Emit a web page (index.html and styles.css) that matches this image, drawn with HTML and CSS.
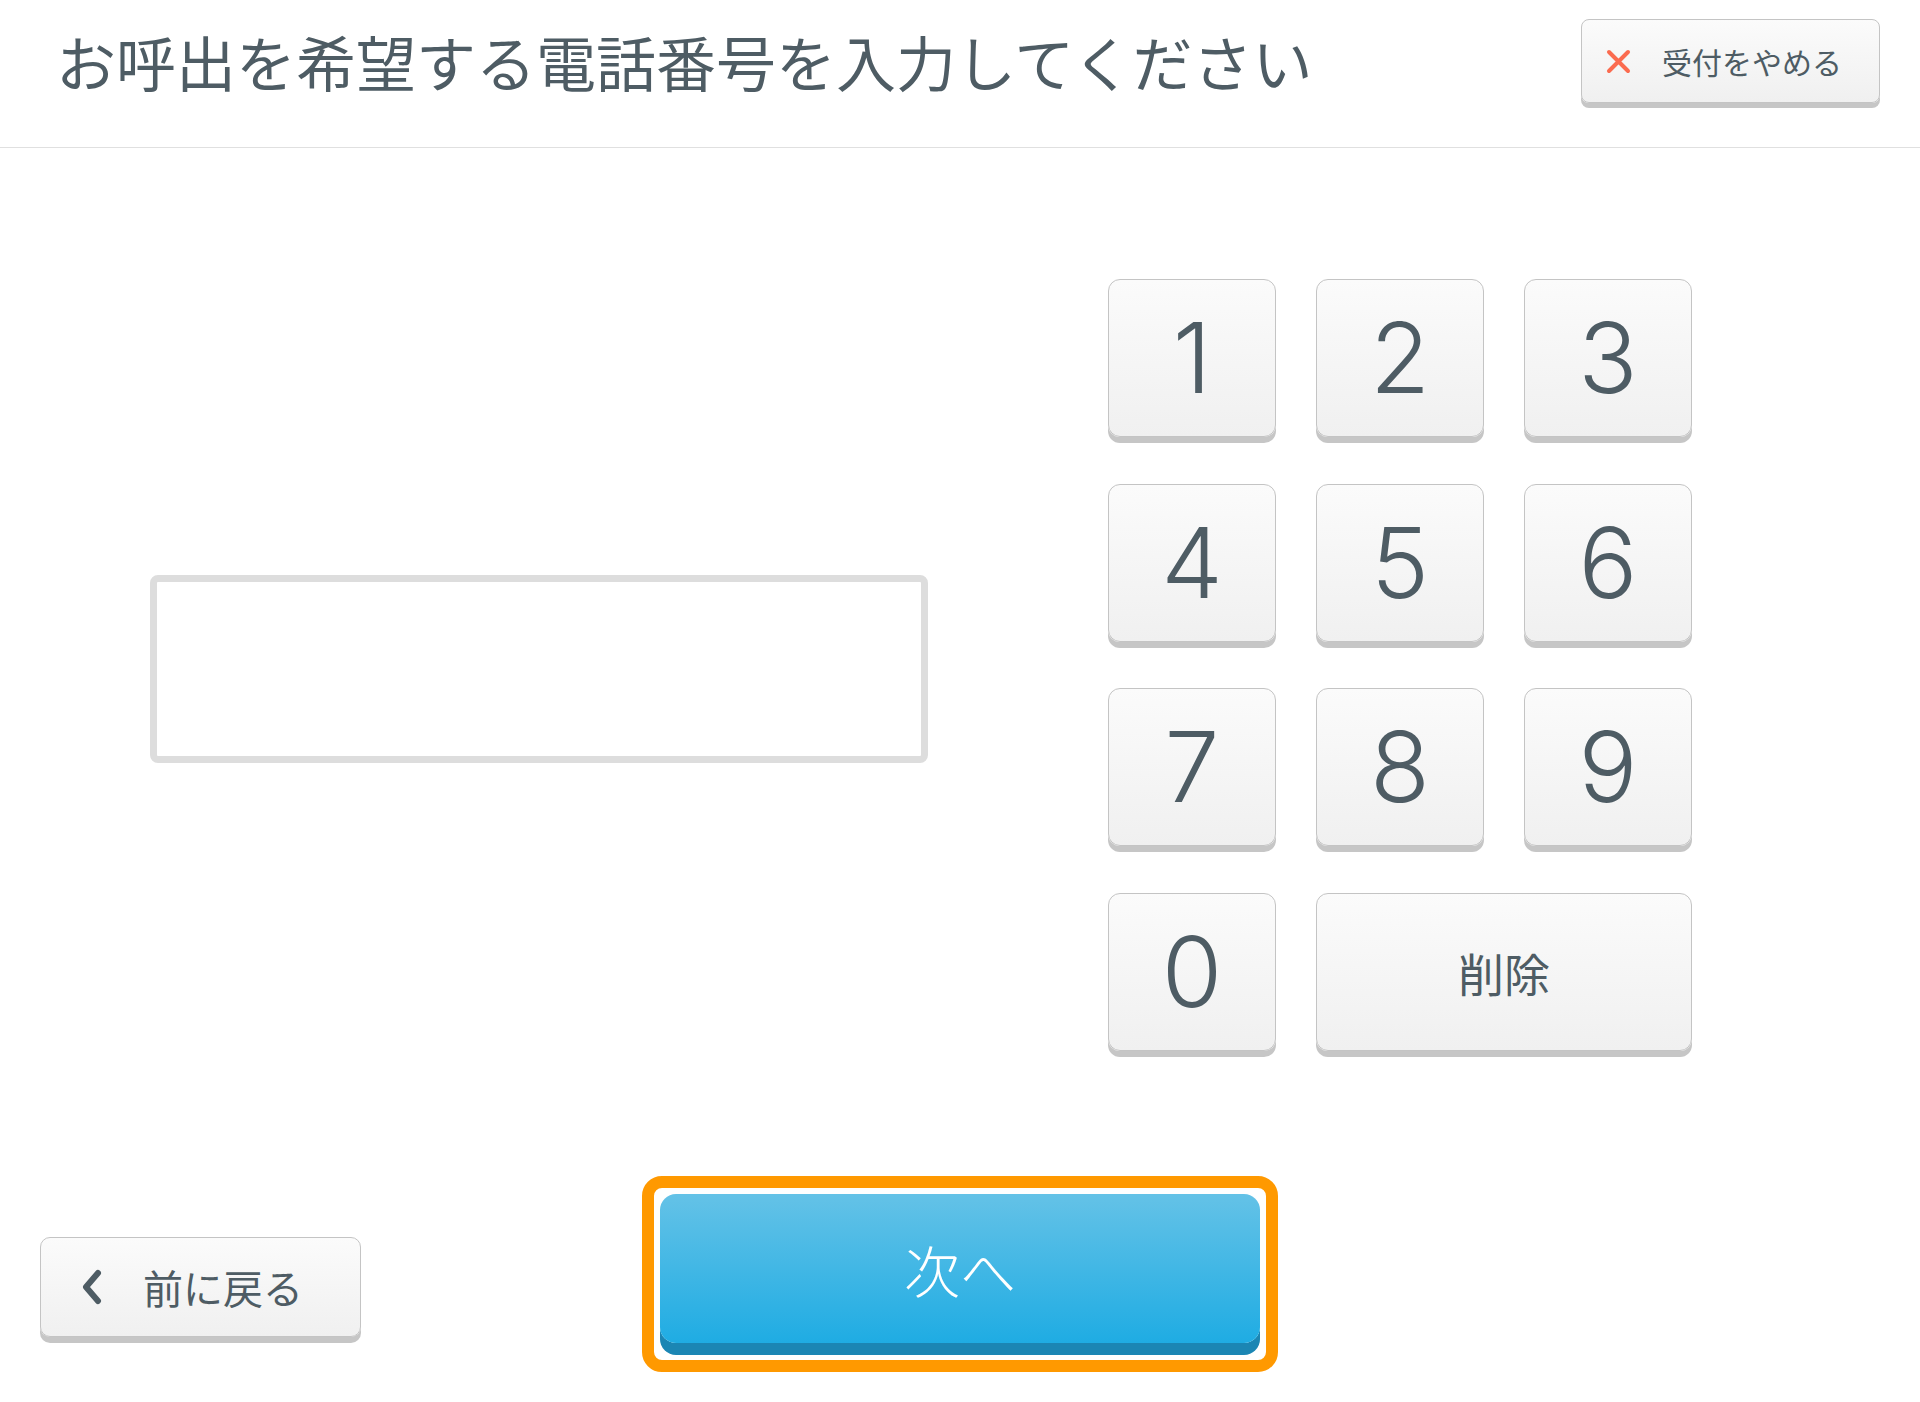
FILE: index.html
```html
<!DOCTYPE html>
<html lang="ja">

<head>
    <meta charset="UTF-8">
    <meta name="viewport" content="width=device-width, initial-scale=1.0">
    <link rel="stylesheet" href="styles.css">
    <title>電話番号入力</title>
</head>

<body>
    <div class="screen">
        <header class="header">
            <h1 class="title">お呼出を希望する電話番号を入力してください</h1>
            <button class="btn cancel-btn">
                <svg class="cancel-icon" width="25" height="25" viewBox="0 0 25 25">
                    <path d="M3 3 L22 22 M22 3 L3 22" stroke="#fb6b4f" stroke-width="4" stroke-linecap="round" fill="none" />
                </svg>
                <span>受付をやめる</span>
            </button>
        </header>

        <main class="main">
            <div class="number-field"></div>

            <div class="keypad">
                <button class="btn key">1</button>
                <button class="btn key">2</button>
                <button class="btn key">3</button>
                <button class="btn key">4</button>
                <button class="btn key">5</button>
                <button class="btn key">6</button>
                <button class="btn key">7</button>
                <button class="btn key">8</button>
                <button class="btn key">9</button>
                <button class="btn key">0</button>
                <button class="btn key key-delete">削除</button>
            </div>
        </main>

        <footer class="footer">
            <button class="btn back-btn">
                <svg class="back-icon" width="22" height="36" viewBox="0 0 22 36">
                    <path d="M17 4 L5 18 L17 32" stroke="#4e5c64" stroke-width="6" stroke-linecap="round" stroke-linejoin="round" fill="none" />
                </svg>
                <span>前に戻る</span>
            </button>

            <div class="next-focus">
                <button class="next-btn">次へ</button>
            </div>
        </footer>
    </div>
</body>

</html>
```

FILE: styles.css
```css
/* General */
body {
    margin: 0;
    background: #ffffff;
    color: #4e5c64;
    font-family: "Noto Sans CJK JP", "Noto Sans", sans-serif;
}

.screen {
    width: 1920px;
    height: 1402px;
    display: flex;
    flex-direction: column;
}

/* Header */
.header {
    box-sizing: border-box;
    height: 148px;
    padding: 0 40px 25px 56px;
    border-bottom: 1px solid #e0e0e0;
    display: flex;
    align-items: center;
    justify-content: space-between;
}

.title {
    margin: 0;
    font-size: 60px;
    font-weight: 400;
    line-height: 1.2;
    color: #4e5c64;
}

.btn {
    box-sizing: border-box;
    border: 1.5px solid #c4c4c4;
    background: linear-gradient(#fbfbfb, #f0f0f0);
    color: #4e5c64;
    font-family: "Noto Sans CJK JP", sans-serif;
    cursor: pointer;
    padding: 0;
}

.cancel-btn {
    width: 299px;
    height: 84px;
    border-radius: 8px;
    box-shadow: 0 5px 0 #c6c6c6;
    display: flex;
    align-items: center;
    padding-left: 24px;
    gap: 31px;
    font-size: 30px;
}

.cancel-icon {
    flex-shrink: 0;
}

/* Main area */
.main {
    display: flex;
    align-items: center;
    padding: 131px 0 0 150px;
    gap: 180px;
}

.number-field {
    box-sizing: border-box;
    width: 778px;
    height: 188px;
    margin-top: 9px;
    border: 7px solid #dddddd;
    border-radius: 8px;
    background: #ffffff;
}

.keypad {
    display: grid;
    grid-template-columns: repeat(3, 168px);
    grid-auto-rows: 158px;
    column-gap: 40px;
    row-gap: 46.5px;
}

.key {
    border-radius: 12px;
    box-shadow: 0 6px 0 #c6c6c6;
    font-family: "Inter", "Noto Sans", sans-serif;
    font-weight: 300;
    font-size: 98px;
    line-height: 1;
    display: flex;
    align-items: center;
    justify-content: center;
}

.key-delete {
    grid-column: span 2;
    font-family: "Noto Sans CJK JP", sans-serif;
    font-weight: 400;
    font-size: 46px;
}

/* Footer */
.footer {
    margin-top: 125px;
    padding: 0 40px;
    display: grid;
    grid-template-columns: 1fr auto 1fr;
}

.back-btn {
    align-self: start;
    margin-top: 61px;
    width: 321px;
    height: 100px;
    border-radius: 10px;
    box-shadow: 0 6px 0 #c6c6c6;
    display: flex;
    align-items: center;
    padding-left: 40px;
    gap: 40px;
    font-size: 40px;
}

.next-focus {
    box-sizing: border-box;
    width: 636px;
    border: 12px solid #ff9900;
    border-radius: 20px;
    padding: 6px 6px 5px;
}

.next-btn {
    display: block;
    width: 600px;
    height: 149px;
    margin-bottom: 12px;
    border: none;
    border-radius: 16px;
    background: linear-gradient(#64c2e7, #1face3);
    box-shadow: 0 12px 0 #1b86b4;
    color: #ffffff;
    font-family: "Noto Sans CJK JP", sans-serif;
    font-weight: 300;
    font-size: 56px;
    cursor: pointer;
}
```
